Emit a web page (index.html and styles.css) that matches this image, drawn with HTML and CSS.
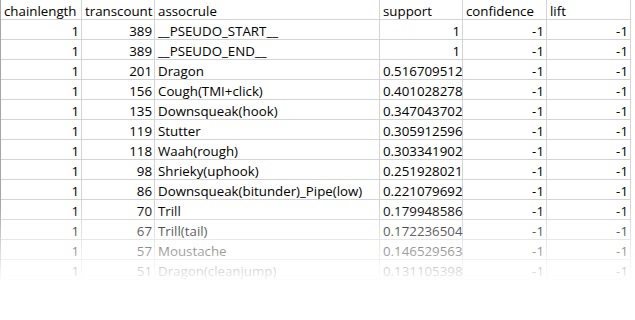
FILE: index.html
```html
<!DOCTYPE html>
<html>
<head>
<meta charset="utf-8">
<link rel="stylesheet" href="styles.css">
</head>
<body>
<div class="page">
  <div class="sheet">
    <div class="cell">chainlength</div><div class="cell">transcount</div><div class="cell">assocrule</div><div class="cell">support</div><div class="cell">confidence</div><div class="cell">lift</div>
    <div class="cell num">1</div><div class="cell num">389</div><div class="cell">__PSEUDO_START__</div><div class="cell num">1</div><div class="cell num">-1</div><div class="cell num">-1</div>
    <div class="cell num">1</div><div class="cell num">389</div><div class="cell">__PSEUDO_END__</div><div class="cell num">1</div><div class="cell num">-1</div><div class="cell num">-1</div>
    <div class="cell num">1</div><div class="cell num">201</div><div class="cell">Dragon</div><div class="cell num">0.516709512</div><div class="cell num">-1</div><div class="cell num">-1</div>
    <div class="cell num">1</div><div class="cell num">156</div><div class="cell">Cough(TMI+click)</div><div class="cell num">0.401028278</div><div class="cell num">-1</div><div class="cell num">-1</div>
    <div class="cell num">1</div><div class="cell num">135</div><div class="cell">Downsqueak(hook)</div><div class="cell num">0.347043702</div><div class="cell num">-1</div><div class="cell num">-1</div>
    <div class="cell num">1</div><div class="cell num">119</div><div class="cell">Stutter</div><div class="cell num">0.305912596</div><div class="cell num">-1</div><div class="cell num">-1</div>
    <div class="cell num">1</div><div class="cell num">118</div><div class="cell">Waah(rough)</div><div class="cell num">0.303341902</div><div class="cell num">-1</div><div class="cell num">-1</div>
    <div class="cell num">1</div><div class="cell num">98</div><div class="cell">Shrieky(uphook)</div><div class="cell num">0.251928021</div><div class="cell num">-1</div><div class="cell num">-1</div>
    <div class="cell num">1</div><div class="cell num">86</div><div class="cell">Downsqueak(bitunder)_Pipe(low)</div><div class="cell num">0.221079692</div><div class="cell num">-1</div><div class="cell num">-1</div>
    <div class="cell num">1</div><div class="cell num">70</div><div class="cell">Trill</div><div class="cell num">0.179948586</div><div class="cell num">-1</div><div class="cell num">-1</div>
    <div class="cell num">1</div><div class="cell num">67</div><div class="cell">Trill(tail)</div><div class="cell num">0.172236504</div><div class="cell num">-1</div><div class="cell num">-1</div>
    <div class="cell num">1</div><div class="cell num">57</div><div class="cell">Moustache</div><div class="cell num">0.146529563</div><div class="cell num">-1</div><div class="cell num">-1</div>
    <div class="cell num">1</div><div class="cell num">51</div><div class="cell">Dragon(cleanjump)</div><div class="cell num">0.131105398</div><div class="cell num">-1</div><div class="cell num">-1</div>
  </div>
  <div class="fade"></div>
</div>
</body>
</html>
```
FILE: styles.css
```css
html, body {
  margin: 0;
  padding: 0;
  background: #ffffff;
}
.page {
  position: relative;
  width: 635px;
  height: 320px;
  overflow: hidden;
}
.sheet {
  display: grid;
  grid-template-columns: 81px 73px 225px 83px 84px 84px;
  grid-auto-rows: 20px;
  width: 630px;
  border-left: 1px solid #a6a6a6;
  font-family: "Open Sans", "Liberation Sans", sans-serif;
  font-size: 13.3px;
  color: #000;
}
.cell {
  box-sizing: border-box;
  border-right: 1px solid #d4d4d4;
  border-bottom: 1px solid #d4d4d4;
  padding: 2px 3px 0 3px;
  line-height: 18px;
  white-space: nowrap;
  overflow: visible;
}
.num {
  text-align: right;
  padding-right: 2px;
}
.fade {
  position: absolute;
  left: 0;
  right: 0;
  top: 205px;
  height: 78px;
  background: linear-gradient(to bottom, rgba(255,255,255,0) 0%, #ffffff 100%);
}
.fade::after {
  content: "";
  position: absolute;
  left: 0;
  right: 0;
  top: 78px;
  height: 100px;
  background: #fff;
}
```
